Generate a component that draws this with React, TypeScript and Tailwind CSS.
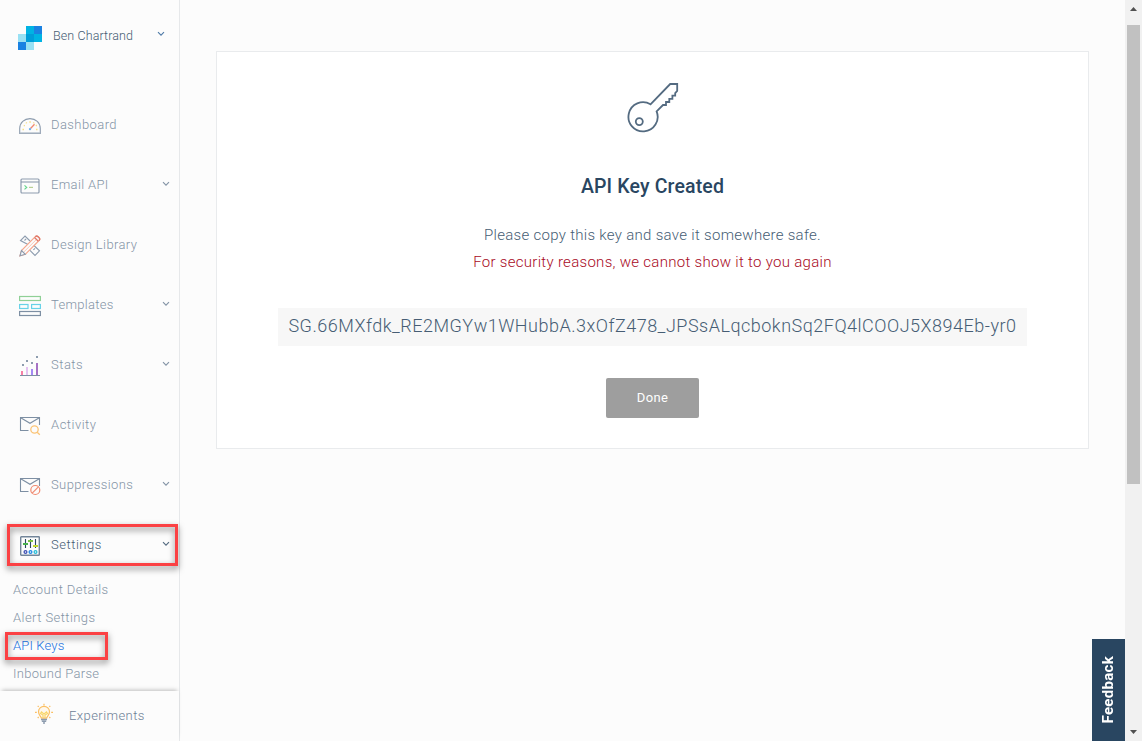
import React from "react";
import { clsx } from "clsx";

function Chevron({ className }: { className?: string }) {
  return (
    <svg width="8" height="6" viewBox="0 0 8 6" fill="none" stroke="currentColor" strokeWidth="1.1" className={className}>
      <path d="M1 1.2 L4 4.2 L7 1.2" />
    </svg>
  );
}

function Logo() {
  return (
    <svg width="24" height="24" viewBox="0 0 24 24" shapeRendering="crispEdges">
      <rect x="8" y="0" width="8" height="8" fill="#00b3e3" />
      <rect x="16" y="0" width="8" height="8" fill="#1a82e2" />
      <rect x="0" y="8" width="8" height="8" fill="#99e1f4" />
      <rect x="8" y="8" width="8" height="8" fill="#009dd9" />
      <rect x="16" y="8" width="8" height="8" fill="#00b3e3" />
      <rect x="0" y="16" width="8" height="8" fill="#1a82e2" />
      <rect x="8" y="16" width="8" height="8" fill="#99e1f4" />
    </svg>
  );
}

const svgProps = { width: 22, height: 22, viewBox: "0 0 22 22", fill: "none", className: "mt-[2px]" } as const;

function DashboardIcon() {
  return (
    <svg {...svgProps}>
      <path d="M.7 18.500V13.600C.7 7.800 5.300 3.600 11 3.600s10.300 4.200 10.300 10v4.900z" stroke="#8d9cae" strokeWidth="1.100" />
      <path d="M1 17.900h20" stroke="#b4bfcb" strokeWidth="1.200" />
      <path d="M3.500 14.500h1.500M17 14.500h1.500M4.800 10.300l1 .6M7 7.500l.7.800M14.500 8.300l.7-.8M16.800 10.800l1-.6M10.300 7h1.500" stroke="#f6df85" strokeWidth="1.400" />
      <path d="M11.500 13.500l4-4.200" stroke="#f08a70" strokeWidth="1.300" />
      <circle cx="11" cy="14.100" r="1.200" fill="#6fb0ee" />
    </svg>
  );
}

function EmailIcon() {
  return (
    <svg {...svgProps}>
      <rect x="2" y="4" width="18" height="14" rx="1" stroke="#8d9cae" strokeWidth="1.200" />
      <path d="M2 7h18" stroke="#8d9cae" strokeWidth="1.100" />
      <path d="M5.500 10.400l2.200 2-2.200 2" stroke="#66d68d" strokeWidth="1.200" />
      <path d="M10 12.400h4" stroke="#b9cf94" strokeWidth="1.200" />
    </svg>
  );
}

function DesignIcon() {
  return (
    <svg {...svgProps}>
      <path d="M9 9.500L1.500 5.500 6 1l5 5M15 10.500l5.500 5.300-4.500 4.700-5.300-5.300M5.500 5.500l1.600-1.600M16 13.300l-1.600 1.600" stroke="#8d9cae" strokeWidth="1.100" />
      <path d="M1 20.800l1.500-5.300L16.300 1.700a2 2 0 0 1 2.800 0l1 1a2 2 0 0 1 0 2.800L6.300 19.300z" fill="#fcfcfc" stroke="#f5a68c" strokeWidth="1.200" />
      <path d="M4.400 17.400L17.800 4.100" stroke="#f5a68c" strokeWidth=".6" />
      <path d="M15.500 2.500l3.800 3.800M16.300 1.700a2 2 0 0 1 2.800 0l1 1a2 2 0 0 1 0 2.800" stroke="#e07a6b" strokeWidth="1.300" />
      <path d="M2.500 15.500L1 20.800l5.300-1.500z" fill="#fcfcfc" stroke="#8d9cae" strokeWidth="1.100" />
    </svg>
  );
}

function TemplatesIcon() {
  return (
    <svg {...svgProps}>
      <rect x=".6" y="1.500" width="20.800" height="4" stroke="#8fd096" strokeWidth="1.200" />
      <rect x=".6" y="9.500" width="8.400" height="4" stroke="#67d2e8" strokeWidth="1.200" />
      <rect x="12.600" y="9.500" width="8.800" height="4" stroke="#67d2e8" strokeWidth="1.200" />
      <rect x=".6" y="16.500" width="20.800" height="4" stroke="#7d8fa3" strokeWidth="1.200" />
    </svg>
  );
}

function StatsIcon() {
  return (
    <svg {...svgProps} shapeRendering="crispEdges">
      <path d="M1 20h20v1H1z" fill="#7d8fa3" />
      <path d="M2 16h2v4H2z" fill="#f77fa6" />
      <path d="M7 12h2v8H7z" fill="#e5c2f0" />
      <path d="M12 14h2v6h-2z" fill="#a58af5" />
      <path d="M17 8h2v12h-2z" fill="#a672c4" />
      <path d="M3 9h2v2H3zM7 5h2v2H7zM12 7h2v2h-2zM17 1h2v2h-2z" fill="#8d9cae" />
    </svg>
  );
}

function Envelope() {
  return <path d="M9.500 16.500H1.500v-13h19V11M1.700 3.700L11 9.300l9.300-5.600" stroke="#7d8fa3" strokeWidth="1.100" />;
}

function ActivityIcon() {
  return (
    <svg {...svgProps} className="">
      <Envelope />
      <circle cx="15.500" cy="15.500" r="3.700" stroke="#fbc476" strokeWidth="1.300" />
      <path d="M18.200 18.200l2.600 2.600" stroke="#fbc476" strokeWidth="1.300" />
    </svg>
  );
}

function SuppressionsIcon() {
  return (
    <svg {...svgProps}>
      <Envelope />
      <circle cx="16.300" cy="15" r="4.500" stroke="#f08a70" strokeWidth="1.200" />
      <path d="M13.200 18.100l6.200-6.200" stroke="#f08a70" strokeWidth="1.200" />
    </svg>
  );
}

function SettingsIcon() {
  return (
    <svg {...svgProps}>
      <rect x="1.700" y="1.700" width="18.600" height="18.600" rx=".6" stroke="#74879b" strokeWidth="1.400" />
      <path d="M6.500 4v9M11.500 4v9M16.500 4v9" stroke="#294661" strokeWidth="1.100" />
      <path d="M4 9h5" stroke="#48b04c" strokeWidth="2" />
      <path d="M9 6h5" stroke="#7cc243" strokeWidth="2" />
      <path d="M14 11h5" stroke="#c0d72f" strokeWidth="2" />
      <circle cx="6.500" cy="17" r="1.400" stroke="#3f51b5" strokeWidth="1.300" />
      <circle cx="11.500" cy="17" r="1.400" stroke="#1e88e5" strokeWidth="1.300" />
      <circle cx="16.500" cy="17" r="1.400" stroke="#26bcd7" strokeWidth="1.300" />
    </svg>
  );
}

function BulbIcon() {
  return (
    <svg width="20" height="22" viewBox="0 0 20 22" fill="none" className="mb-[4px]">
      <path d="M7.400 15.200c0-1.500-2.900-3-2.900-6.400a5.500 5.500 0 0 1 11 0c0 3.400-2.900 4.900-2.900 6.400z" stroke="#fbbf62" strokeWidth="1.200" fill="#fff8ec" />
      <path d="M9 15V12L6.500 10.500l1-1.500 2.500 2 2.500-2 1 1.500L11 12v3" stroke="#f8d66a" strokeWidth="1.200" />
      <path d="M10 .8v1.600M3.700 2.800l1 1M16.300 2.800l-1 1M1 9.300h1.800M17.200 9.300H19M3.700 15l1-1M16.300 15l-1-1" stroke="#fbbf62" strokeWidth="1.200" />
      <path d="M7 16.500h6M7.800 18.300h4.400M9 20h2" stroke="#8d9cae" strokeWidth="1.500" />
    </svg>
  );
}

function KeyIcon() {
  return (
    <svg width="52" height="52" viewBox="0 0 52 52" fill="none" stroke="#546b81" strokeWidth="1.800">
      <path d="M23.500 22.300L43.200 2H50.200V9L48.200 11V13.700H45.400V16.800H42.300V20H39V23H36L29.600 29.400A14.600 14.600 0 1 1 23.500 22.300Z" />
      <circle cx="12.300" cy="39.600" r="3.500" />
    </svg>
  );
}

const nav = [
  { label: "Dashboard", icon: DashboardIcon, chevron: false, tracking: "tracking-[0.42px]" },
  { label: "Email API", icon: EmailIcon, chevron: true, tracking: "tracking-[0.35px]" },
  { label: "Design Library", icon: DesignIcon, chevron: false, tracking: "tracking-[0.37px]" },
  { label: "Templates", icon: TemplatesIcon, chevron: true, tracking: "tracking-[0.3px]" },
  { label: "Stats", icon: StatsIcon, chevron: true, tracking: "tracking-[0.5px]" },
  { label: "Activity", icon: ActivityIcon, chevron: false, tracking: "tracking-[0.5px]" },
  { label: "Suppressions", icon: SuppressionsIcon, chevron: true, tracking: "tracking-[0.4px]" },
  { label: "Settings", icon: SettingsIcon, chevron: true, active: true, tracking: "tracking-[0.53px]" },
];

const subNav = [
  { label: "Account Details", tracking: "tracking-[0.42px]" },
  { label: "Alert Settings", tracking: "tracking-[0.43px]" },
  { label: "API Keys", active: true, tracking: "tracking-[0.15px]" },
  { label: "Inbound Parse", tracking: "tracking-[0.3px]" },
];

function Sidebar() {
  return (
    <aside className="relative flex w-[180px] shrink-0 flex-col border-r border-[#e6e8ea] bg-[#fcfcfc]">
      <header className="flex h-[95px] shrink-0 items-start pl-[18px] pr-[14px] pt-[26px]">
        <Logo />
        <span className="ml-[11px] text-[12.500px] leading-5 tracking-[0.1px] text-[#465d74]">Ben Chartrand</span>
        <Chevron className="ml-auto mt-[5px] text-[#4f7ba8]" />
      </header>
      <nav>
        {nav.map(({ label, icon: Icon, chevron, active, tracking }) => (
          <div key={label} className={clsx("flex h-[60px] items-center pl-[19px] pr-[9px]", active ? "text-[#465d74]" : "text-[#8494a6]")}>
            <Icon />
            <span className={clsx("ml-[10px] text-[13px]", tracking)}>{label}</span>
            {chevron && <Chevron className={clsx("mb-[3px] ml-auto", active ? "text-[#546b81]" : "text-[#8494a6]")} />}
          </div>
        ))}
      </nav>
      <ul className="pt-px">
        {subNav.map(({ label, active, tracking }) => (
          <li key={label} className={clsx("flex h-7 items-center pl-[13px] text-[13px]", tracking, active ? "text-[#1a72e2]" : "text-[#8494a6]")}>
            {label}
          </li>
        ))}
      </ul>
      <footer className="mt-auto flex h-[50px] shrink-0 items-center bg-[#fcfcfc] pl-[34px] text-[13px] text-[#6c8096] shadow-[0_-3px_4px_-2px_rgba(0,0,0,0.25)]">
        <BulbIcon />
        <span className="ml-[15px] tracking-[0.42px]">Experiments</span>
      </footer>
      <div className="absolute left-[7px] top-[524px] h-[42px] w-[171px] border-[3px] border-[#fb4144] drop-shadow-[0_3px_3px_rgba(0,0,0,0.500)]" />
      <div className="absolute left-[5px] top-[632px] h-[28px] w-[103px] border-[3px] border-[#fb4144] drop-shadow-[0_3px_3px_rgba(0,0,0,0.500)]" />
    </aside>
  );
}

function Scrollbar() {
  return (
    <div className="flex w-[17px] shrink-0 flex-col items-center bg-[#f1f1f1]">
      <svg width="17" height="25" viewBox="0 0 17 25" className="shrink-0">
        <path d="M5 11h7L8.500 7z" fill="#505050" />
      </svg>
      <div className="h-[459px] w-[13px] bg-[#c1c1c1]" />
      <svg width="17" height="17" viewBox="0 0 17 17" className="mt-auto">
        <path d="M5 6h7L8.500 10z" fill="#505050" />
      </svg>
    </div>
  );
}

export default function App() {
  return (
    <div className="flex h-[741px] w-[1142px] overflow-hidden bg-[#fcfcfc] font-['Roboto',sans-serif] font-light">
      <Sidebar />
      <main className="relative flex-1 px-9 pt-[51px]">
        <section className="flex h-[398px] flex-col items-center border border-[#e9ebed] bg-white pt-[30px]">
          <KeyIcon />
          <h1 className="mt-[39px] text-[19.500px] font-medium leading-7 tracking-[0.15px] text-[#294661]">API Key Created</h1>
          <p className="mt-[21px] text-[15px] leading-[27px] tracking-[0.3px] text-[#465d74]">Please copy this key and save it somewhere safe.</p>
          <p className="text-[15px] leading-[27px] tracking-[0.3px] text-[#a80a24]">For security reasons, we cannot show it to you again</p>
          <div className="mt-[32px] flex h-[38px] w-[749px] items-center justify-center bg-[#f7f7f7] pb-[3px] text-[18px] tracking-[0.5px] text-[#465d74]">
            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
          </div>
          <button className="mt-8 h-10 w-[93px] rounded-[2px] bg-[#9e9e9e] text-[13px] font-normal tracking-[0.35px] text-white">Done</button>
        </section>
        <div className="absolute bottom-0 right-0 flex h-[102px] w-[33px] items-center justify-center bg-[#294661] text-white">
          <span className="rotate-180 text-[15px] font-bold tracking-[0.3px] [writing-mode:vertical-rl]">Feedback</span>
        </div>
      </main>
      <Scrollbar />
    </div>
  );
}
